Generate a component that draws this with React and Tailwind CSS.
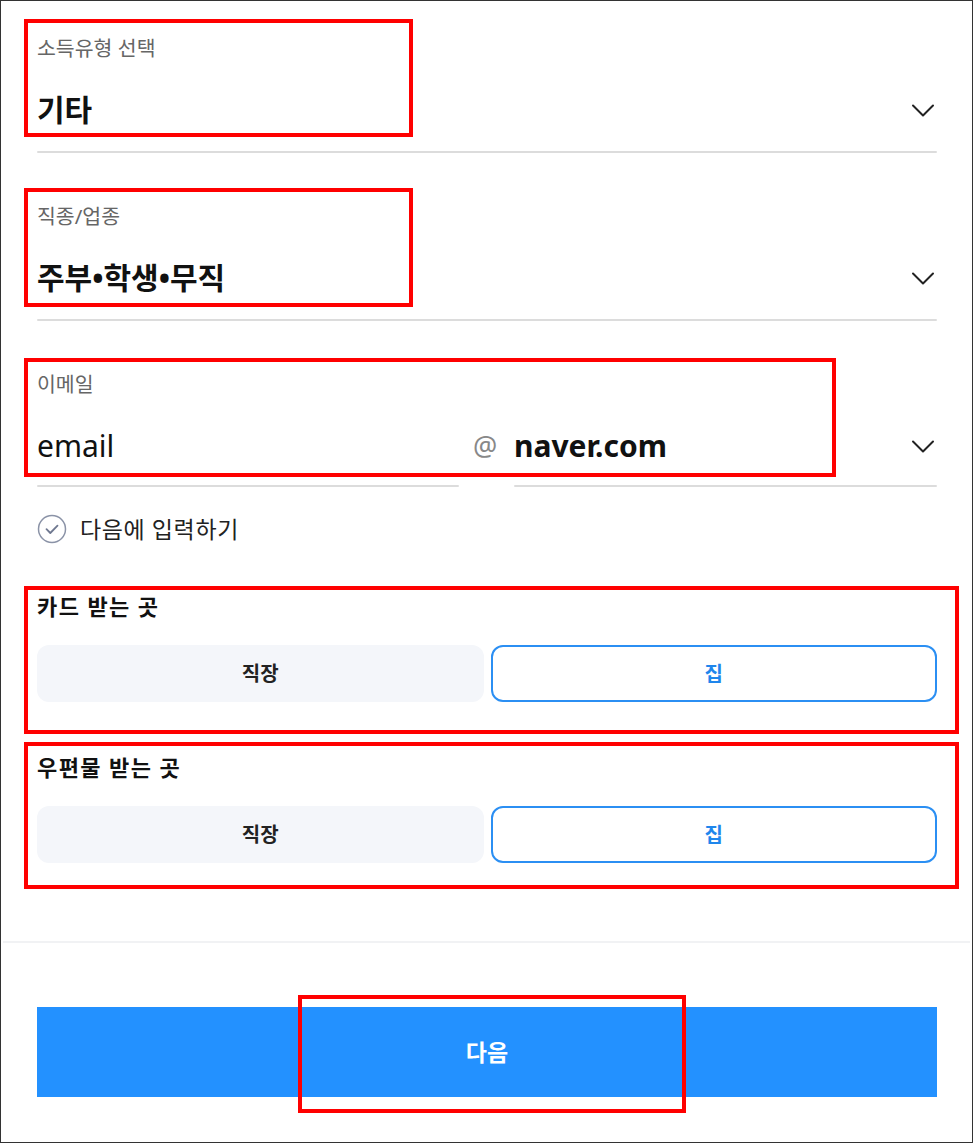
import React from "react";

const FONT = {
  fontFamily: "'Noto Sans', 'Noto Sans CJK KR', sans-serif",
};

const Chevron = () => (
  <svg viewBox="0 0 24 24" fill="none" stroke="#222" strokeWidth="2"
    strokeLinecap="round" strokeLinejoin="round" className="w-[24px] h-[24px]">
    <path d="M2 7.5l10 10 10-10" />
  </svg>
);

const CheckCircle = () => (
  <svg viewBox="0 0 30 30" fill="none" className="w-[30px] h-[30px]">
    <circle cx="15" cy="15" r="13.5" stroke="#8b93a7" strokeWidth="1.5" />
    <path d="M9.5 15.2l3.8 3.8 7.2-7.4" stroke="#6f7890" strokeWidth="1.8"
      strokeLinecap="round" strokeLinejoin="round" />
  </svg>
);

function SelectField({ label, value, className = "" }) {
  return (
    <div className={className}>
      <p className="h-[24px] leading-[24px] text-[20.5px] text-[#666]">{label}</p>
      <div className="mt-[32px] h-[36px] flex items-center justify-between">
        <span className="text-[30px] font-bold text-[#111] leading-[36px]">{value}</span>
        <span className="mr-[2px]"><Chevron /></span>
      </div>
      <div className="mt-[23px] h-[2px] bg-[#dcdcdc] rounded-full" />
    </div>
  );
}

function Choice({ title, className = "" }) {
  return (
    <div className={className}>
      <p className="h-[28px] leading-[28px] text-[22px] tracking-[1.4px] font-bold text-[#111]">{title}</p>
      <div className="mt-[25px] grid grid-cols-2 gap-[7px]">
        <button className="h-[57px] rounded-[12px] bg-[#f4f6fa] text-[20px] font-bold text-[#222]">
          직장
        </button>
        <button className="h-[57px] rounded-[12px] border-[2.5px] border-[#2b8ff3] bg-white text-[20px] font-bold text-[#1f86ec]">
          집
        </button>
      </div>
    </div>
  );
}

const RED = [
  { k: 1, c: "left-[23px] top-[18px] w-[389px] h-[118px]" },
  { k: 2, c: "left-[23px] top-[187px] w-[389px] h-[119px]" },
  { k: 3, c: "left-[23px] top-[357px] w-[812px] h-[119px]" },
  { k: 4, c: "left-[23px] top-[585px] w-[935px] h-[148px]" },
  { k: 5, c: "left-[23px] top-[741px] w-[935px] h-[147px]" },
  { k: 6, c: "left-[297px] top-[994px] w-[388px] h-[118px]" },
];

export default function App() {
  return (
    <div className="relative w-[973px] h-[1143px] border border-[#333] bg-white overflow-hidden" style={FONT}>
      <div className="pt-[35px] pl-[36px] pr-[35px]">
        <SelectField label="소득유형 선택" value="기타" />
        <SelectField label="직종/업종" value="주부•학생•무직" className="mt-[51px]" />

        {/* Email */}
        <div className="mt-[51px]">
          <p className="h-[24px] leading-[24px] text-[20.5px] text-[#666]">이메일</p>
          <div className="mt-[32px] h-[36px] flex items-center">
            <span className="w-[436px] text-[30px] text-[#111] leading-[36px]">email</span>
            <span className="w-[41px] text-[27px] text-[#888] leading-[36px]">@</span>
            <span className="flex-1 text-[30px] font-bold text-[#111] leading-[36px]">naver.com</span>
            <span className="mr-[2px]"><Chevron /></span>
          </div>
          <div className="mt-[21px] flex items-center">
            <div className="w-[422px] h-[2px] bg-[#dcdcdc] rounded-full" />
            <div className="ml-[55px] flex-1 h-[2px] bg-[#dcdcdc] rounded-full" />
          </div>
        </div>

        <div className="mt-[28px] h-[28px] flex items-center gap-[13px]">
          <CheckCircle />
          <span className="text-[23px] tracking-[0.6px] text-[#222]">다음에 입력하기</span>
        </div>

        <Choice title="카드 받는 곳" className="mt-[49px]" />
        <Choice title="우편물 받는 곳" className="mt-[51px]" />
      </div>

      <div className="mt-[78px] mx-[2px] h-[2px] bg-[#f1f2f4]" />

      <div className="mt-[64px] pl-[36px] pr-[35px]">
        <button className="w-full h-[90px] bg-[#2391ff] text-white text-[23px] font-bold">
          다음
        </button>
      </div>

      {RED.map((r) => (
        <div key={r.k} className={`absolute border-[4px] border-[#ff0000] pointer-events-none ${r.c}`} />
      ))}
    </div>
  );
}
